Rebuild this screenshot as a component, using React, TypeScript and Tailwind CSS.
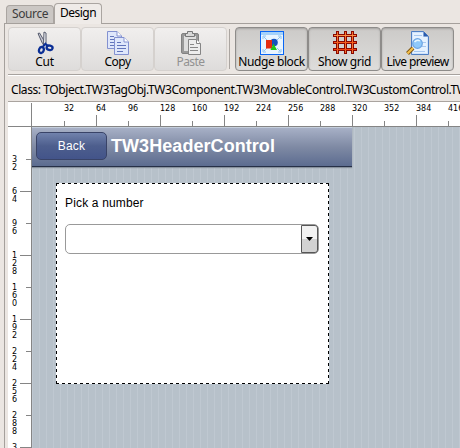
import React from 'react';

const topTicks = Array.from({ length: 13 }, (_, i) => (i + 1) * 32);
const sideTicks = Array.from({ length: 10 }, (_, i) => (i + 1) * 32);

function Cut() {
  return (
    <svg width="20" height="24" viewBox="0 0 20 24">
      <path d="M3 2.5 L4.5 2 L10.5 12 L9 14.5 L7.5 12.5 Z" fill="#c9cad6" stroke="#555a6c" />
      <path d="M9 1 L11 2 L11 12 L8.5 14 Z" fill="#f4f4f8" stroke="#555a6c" />
      <ellipse cx="6.4" cy="19" rx="2.3" ry="3" transform="rotate(20 6.4 19)" fill="none" stroke="#0b2f96" strokeWidth="2.3" />
      <ellipse cx="14.6" cy="16.8" rx="3" ry="2.2" transform="rotate(15 14.6 16.8)" fill="none" stroke="#0b2f96" strokeWidth="2.3" />
      <path d="M8 15.5 L10.5 12.8 L12.5 14.8" fill="none" stroke="#0b2f96" strokeWidth="2" />
    </svg>
  );
}
function CopyIcon() {
  const sheet = (x: number, y: number) => (
    <g transform={`translate(${x} ${y})`}>
      <path d="M.5 .5 H10 L14.5 5 V17.5 H.5 Z" fill="#dfe7fb" stroke="#8391d0" />
      <path d="M10 .5 V5 H14.5" fill="#fff" stroke="#8391d0" />
      <path d="M3 5.5 H7 M3 8.5 H12 M3 11.5 H12 M3 14.5 H9" stroke="#6275bb" />
    </g>
  );
  return <svg width="24" height="24" viewBox="0 0 24 24">{sheet(1, 0)}{sheet(8, 6)}</svg>;
}
function PasteIcon() {
  return (
    <svg width="22" height="24" viewBox="0 0 22 24">
      <rect x="1.5" y="2.5" width="17" height="20" rx="1.5" fill="#999" stroke="#828282" />
      <rect x="4" y="5" width="12" height="15" fill="#dedede" />
      <path d="M5.5 5.5 V2.5 H7.5 V.5 H12.5 V2.5 H14.5 V5.5 Z" fill="#d8d8d8" stroke="#777" />
      <path d="M8.5 8.5 H16.5 L20.5 12.5 V23.5 H8.5 Z" fill="#ededed" stroke="#858585" />
      <path d="M16.5 8.5 V12.5 H20.5" fill="#fff" stroke="#858585" />
      <path d="M10 13.5 H14 M10 16.5 H18 M10 19.5 H18" stroke="#888" />
    </svg>
  );
}
function NudgeIcon() {
  return (
    <svg width="24" height="24" viewBox="0 0 24 24">
      <rect x=".5" y=".5" width="23" height="23" fill="#e9f5ff" stroke="#0866f5" />
      <path d="M1 2.5 H23" stroke="#a5d2fa" strokeWidth="3" />
      <path d="M3 8 V5 H6 M18 5 H21 V8 M3 18 V21 H6 M18 21 H21 V18 M4 6 L7 9 M20 6 L17 9 M4 20 L7 17 M20 20 L17 17" fill="none" stroke="#8fc4f0" />
      <circle cx="14" cy="11.5" r="3.8" fill="#1452bd" />
      <rect x="6" y="9" width="6" height="8.5" fill="#e52c11" />
      <path d="M13.5 12.5 L17 19 H10.5 Z" fill="#20c51b" />
    </svg>
  );
}
function GridIcon() {
  const d = 'M4.5 0 V23 M12.5 0 V23 M19.5 0 V23 M0 4.5 H24 M0 11.5 H24 M0 18.5 H24';
  return (
    <svg width="24" height="24" viewBox="0 0 24 24">
      <path d={d} stroke="#8c0800" strokeWidth="3" />
      <path d="M4.5 1 V22 M12.5 1 V22 M19.5 1 V22" stroke="#f4732d" strokeWidth="1" />
      <path d="M1 4.5 H23" stroke="#fb9146" strokeWidth="1" />
      <path d="M1 11.5 H23" stroke="#f65a1c" strokeWidth="1" />
      <path d="M1 18.5 H23" stroke="#f14310" strokeWidth="1" />
    </svg>
  );
}
function PreviewIcon() {
  return (
    <svg width="24" height="24" viewBox="0 0 24 24">
      <path d="M5.5 .5 H17.5 L22.5 5.5 V23.5 H5.5 Z" fill="#cfe3fb" stroke="#4f7fc4" />
      <path d="M7 2 H17 V6 H21 V22 H7 Z" fill="#e6f2ff" />
      <path d="M17.5 .5 V5.5 H22.5 Z" fill="#2a5cae" />
      <path d="M8 4.5 H16 M8 20.5 H19 M16 11.5 H20 M16 15.5 H20" stroke="#a8c8f0" />
      <path d="M7 17 L1.5 22.5" stroke="#805715" strokeWidth="4" />
      <path d="M7 17 L1.5 22.5" stroke="#f4c04a" strokeWidth="2.2" />
      <circle cx="11.5" cy="12.5" r="4.8" fill="#8fc9fa" stroke="#6ea5e2" strokeWidth="1.2" />
      <path d="M8.5 11 Q11 8 14 10" stroke="#e8f7ff" strokeWidth="1.5" fill="none" />
    </svg>
  );
}

function Tool({ icon, label, pressed, muted, spacing }: { icon: React.ReactNode; label: string; pressed?: boolean; muted?: boolean; spacing: string }) {
  return (
    <button
      className={`flex h-[44px] w-[73px] shrink-0 flex-col items-center whitespace-nowrap rounded-[4px] border pt-[3px] text-[12px] leading-[14px] ${spacing} ${
        pressed
          ? 'border-[#8e8c8a] bg-linear-to-b from-[#cccac8] via-[#d5d4d2] to-[#dedddb] shadow-[inset_0_1px_2px_#a5a3a1]'
          : 'border-[#d5d1ce] bg-linear-to-b from-[#f1efee] to-[#dedcdb]'
      } ${muted ? 'text-[#929292]' : 'text-black'}`}
    >
      {icon}
      <span className="block">{label}</span>
    </button>
  );
}

export default function App() {
  return (
    <div className="flex h-[448px] w-[460px] flex-col overflow-hidden bg-[#ebe6e2] font-['Noto_Sans','Open_Sans',sans-serif] text-black">
      <div className="flex h-[23px] shrink-0 items-end pl-[6px] text-[12px] leading-[16px]">
        <div className="h-[18px] w-[48px] rounded-t-[4px] border border-b-0 border-[#aaa5a1] bg-[#cbc7c4] pl-[5px] tracking-[-0.4px] text-[#3c3c3c]">Source</div>
        <div className="z-10 mb-[-1px] h-[21px] w-[48px] rounded-t-[4px] border border-b-0 border-[#aaa5a1] bg-[#efebe8] pl-[5px] pt-px tracking-[-0.5px]">Design</div>
      </div>
      <div className="ml-[4px] flex min-h-0 w-[456px] flex-1 flex-col border-l border-t border-[#a5a09c] pl-[3px]">
        <div className="flex h-[51px] shrink-0 border-b border-[#a7a29e] pt-[3px]">
          <Tool icon={<Cut />} label="Cut" spacing="tracking-[-0.3px]" />
          <Tool icon={<CopyIcon />} label="Copy" spacing="tracking-[-0.5px]" />
          <Tool icon={<PasteIcon />} label="Paste" muted spacing="tracking-[-0.6px]" />
          <div className="ml-[2px] mr-[5px] mt-[2px] h-[40px] w-px bg-[#aaa5a1]" />
          <Tool icon={<NudgeIcon />} label="Nudge block" pressed spacing="tracking-[-0.42px]" />
          <Tool icon={<GridIcon />} label="Show grid" pressed spacing="tracking-[-0.4px]" />
          <Tool icon={<PreviewIcon />} label="Live preview" pressed spacing="tracking-[-0.6px]" />
        </div>
        <div className="h-[26px] shrink-0 whitespace-nowrap border-t border-white pl-[3px] pt-[5px] text-[12px] leading-[17px] tracking-[-0.42px]">
          Class: TObject.TW3TagObj.TW3Component.TW3MovableControl.TW3CustomControl.TW3
        </div>
        <div className="flex h-[26px] shrink-0 border-t border-[#aaa49f] bg-white font-['DejaVu_Sans',sans-serif] text-[8px] leading-[8px]">
          <div className="w-[24px] shrink-0 border-b border-[#858585]">
            <div className="ml-[23px] mt-px h-[23px] w-px bg-[#858585]" />
          </div>
          <div className="flex border-b border-[#858585] pl-[32px]">
            {topTicks.map((n) => (
              <div key={n} className="flex w-[32px] shrink-0 flex-col justify-between">
                <span className="mt-[3px] whitespace-nowrap">{n}</span>
                <i className={`w-px bg-[#858585] ${n % 64 === 0 ? 'h-[11px]' : 'h-[5px]'}`} />
              </div>
            ))}
          </div>
        </div>
        <div className="flex min-h-0 flex-1">
          <div className="h-[321px] w-[24px] shrink-0 overflow-hidden border-r border-[#858585] bg-white pt-[28px] font-['DejaVu_Sans',sans-serif] text-[8px] leading-[8px]">
            {sideTicks.map((n) => (
              <div key={n} className="flex h-[32px] justify-between pl-[4px]">
                <div className="w-[5px] pt-px">
                  {String(n).split('').map((d, i) => <div key={i}>{d}</div>)}
                </div>
                <i className={`mt-[4px] h-px bg-[#858585] ${n % 64 === 0 ? 'w-[11px]' : 'w-[5px]'}`} />
              </div>
            ))}
          </div>
          <div className="h-[321px] flex-1 bg-[#b7c1ca] bg-[linear-gradient(90deg,#bfc8d1_1px,transparent_1px)] bg-[size:7px_7px] font-['Liberation_Sans',Arial,sans-serif]">
            <div className="flex h-[40px] w-[320px] border-b border-t border-b-[#263047] border-t-[#c4cedc] bg-linear-to-b from-[#a7b0c6] via-[#7f8aa4] to-[#5c6c90] pl-[4px] pt-[4px] shadow-[0_1px_1px_#87919c]">
              <div className="h-[28px] w-[71px] rounded-[5px] border border-[#394367] bg-linear-to-b from-[#7182ac] via-[#4d5e8d] to-[#43548a] text-center text-[12px] leading-[26px] tracking-[0.15px] text-white">Back</div>
              <div className="ml-[4px] mt-[3px] text-[18px] font-bold leading-[22px] tracking-[0.06px] text-white">TW3HeaderControl</div>
            </div>
            <div className="ml-[24px] mt-[16px] h-[201px] w-[273px] bg-[linear-gradient(90deg,#000_3px,#fff_3px),linear-gradient(90deg,#000_3px,#fff_3px),linear-gradient(180deg,#000_3px,#fff_3px),linear-gradient(180deg,#000_3px,#fff_3px)] bg-white bg-[position:0_0,0_100%,0_0,100%_0] bg-[size:6px_1px,6px_1px,1px_6px,1px_6px] [background-repeat:repeat-x,repeat-x,repeat-y,repeat-y] px-[9px] pt-[13px] text-[12px] leading-[15px]">
              <div className="tracking-[0.16px]">Pick a number</div>
              <div className="mt-[13px] flex h-[30px] w-[254px] justify-end rounded-[5px] border border-[#999] bg-white">
                <div className="flex w-[17px] items-center justify-center rounded-r-[3px] border border-[#565656] bg-linear-to-b from-[#f2f2f2] from-50% to-[#d2d2d2] to-50%">
                  <svg width="7" height="4" viewBox="0 0 7 4"><path d="M0 0 H7 L3.5 4 Z" fill="#000" /></svg>
                </div>
              </div>
            </div>
          </div>
        </div>
      </div>
    </div>
  );
}
